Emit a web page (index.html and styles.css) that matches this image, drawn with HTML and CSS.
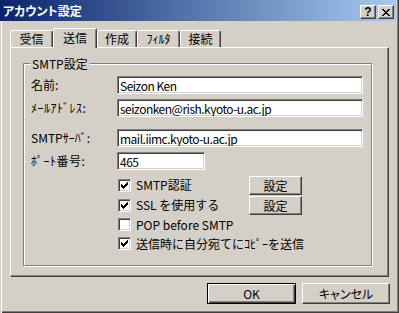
FILE: index.html
```html
<html>
    <head>
        <link rel="stylesheet" href="styles.css">
    </head>
    <body>
        <div class="window">
            <div class="titlebar">
                <div class="title">アカウント設定</div>
                <div class="caption-buttons">
                    <div class="caption-btn help">?</div>
                    <div class="caption-btn">
                        <svg width="8" height="7" viewBox="0 0 8 7" shape-rendering="crispEdges">
                            <path d="M0 0h2v1h-2z M6 0h2v1h-2z M1 1h2v1h-2z M5 1h2v1h-2z M2 2h4v1h-4z M3 3h2v1h-2z M2 4h4v1h-4z M1 5h2v1h-2z M5 5h2v1h-2z M0 6h2v1h-2z M6 6h2v1h-2z" fill="#000"/>
                        </svg>
                    </div>
                </div>
            </div>
            <div class="tabs">
                <div class="tab tab-recv">受信</div>
                <div class="tab tab-active tab-send">送信</div>
                <div class="tab tab-write">作成</div>
                <div class="tab tab-filter">ﾌｨﾙﾀ</div>
                <div class="tab tab-conn">接続</div>
            </div>
            <div class="panel">
                <div class="group">
                    <div class="group-title">SMTP設定</div>
                    <div class="row first">
                        <label class="label">名前:</label>
                        <input class="field width-lg" type="text" value="Seizon Ken"/>
                    </div>
                    <div class="row">
                        <label class="label kana">ﾒｰﾙｱﾄﾞﾚｽ:</label>
                        <input class="field width-lg" type="text" value="seizonken@rish.kyoto-u.ac.jp"/>
                    </div>
                    <div class="row spaced">
                        <label class="label">SMTPｻｰﾊﾞ:</label>
                        <input class="field width-lg" type="text" value="mail.iimc.kyoto-u.ac.jp"/>
                    </div>
                    <div class="row">
                        <label class="label kana">ﾎﾟｰﾄ番号:</label>
                        <input class="field width-sm" type="text" value="465"/>
                    </div>
                    <div class="checks">
                        <div class="check-row">
                            <span class="box"><svg width="11" height="11" viewBox="0 0 11 11" shape-rendering="crispEdges"><path d="M2 4h1v3h-1z M3 5h1v3h-1z M4 6h1v3h-1z M5 5h1v3h-1z M6 4h1v3h-1z M7 3h1v3h-1z M8 2h1v3h-1z" fill="#000"/></svg></span>
                            <span class="check-label">SMTP認証</span>
                            <button class="button-sm">設定</button>
                        </div>
                        <div class="check-row">
                            <span class="box"><svg width="11" height="11" viewBox="0 0 11 11" shape-rendering="crispEdges"><path d="M2 4h1v3h-1z M3 5h1v3h-1z M4 6h1v3h-1z M5 5h1v3h-1z M6 4h1v3h-1z M7 3h1v3h-1z M8 2h1v3h-1z" fill="#000"/></svg></span>
                            <span class="check-label">SSL を使用する</span>
                            <button class="button-sm">設定</button>
                        </div>
                        <div class="check-row short">
                            <span class="box"></span>
                            <span class="check-label">POP before SMTP</span>
                        </div>
                        <div class="check-row short">
                            <span class="box"><svg width="11" height="11" viewBox="0 0 11 11" shape-rendering="crispEdges"><path d="M2 4h1v3h-1z M3 5h1v3h-1z M4 6h1v3h-1z M5 5h1v3h-1z M6 4h1v3h-1z M7 3h1v3h-1z M8 2h1v3h-1z" fill="#000"/></svg></span>
                            <span class="check-label wide">送信時に自分宛てにｺﾋﾟｰを送信</span>
                        </div>
                    </div>
                </div>
            </div>
            <div class="footer">
                <button class="button-lg default">OK</button>
                <button class="button-lg">キャンセル</button>
            </div>
        </div>
    </body>
</html>
```

FILE: styles.css
```css
body {
    margin: 0;
    font-family: "Noto Sans CJK JP", sans-serif;
    font-size: 12px;
    color: #000;
}
.window {
    width: 399px;
    height: 313px;
    box-sizing: border-box;
    background: #d4d0c8;
    box-shadow: inset 1px 0 #d4d0c8, inset 2px 0 #fff, inset -1px -1px #404040, inset -2px -2px #808080;
}
.titlebar {
    width: 396px;
    height: 21px;
    box-sizing: border-box;
    padding: 0 2px 0 3px;
    display: flex;
    justify-content: space-between;
    background: linear-gradient(to right, #0a246a, #a6caf0);
}
.title {
    color: #fff;
    font-weight: bold;
    line-height: 22px;
    font-feature-settings: "palt";
}
.caption-buttons {
    display: flex;
    gap: 2px;
    margin-top: 5px;
}
.caption-btn {
    width: 16px;
    height: 14px;
    box-sizing: border-box;
    background: #d4d0c8;
    border: 1px solid;
    border-color: #fff #404040 #404040 #fff;
    box-shadow: inset -1px -1px #808080;
    display: flex;
    align-items: center;
    justify-content: center;
}
.help {
    font-family: "Liberation Sans", sans-serif;
    font-weight: bold;
    font-size: 12px;
    line-height: 12px;
}
.tabs {
    display: flex;
    align-items: flex-end;
    height: 19px;
    margin-top: 7px;
    padding-left: 10px;
}
.tab {
    height: 17px;
    box-sizing: border-box;
    border: 1px solid;
    border-bottom: none;
    border-color: #fff #404040 #404040 #fff;
    border-radius: 2px 2px 0 0;
    box-shadow: inset -1px 0 #808080;
    text-align: center;
    line-height: 16px;
}
.tab-active {
    height: 20px;
    margin-bottom: -1px;
    position: relative;
    background: #d4d0c8;
    line-height: 17px;
}
.tab-recv { width: 43px; }
.tab-send { width: 44px; }
.tab-write { width: 40px; }
.tab-filter { width: 43px; }
.tab-conn { width: 41px; }
.panel {
    margin-left: 10px;
    width: 379px;
    height: 230px;
    box-sizing: border-box;
    border: 1px solid;
    border-color: #fff #404040 #404040 #fff;
    box-shadow: inset -1px -1px #808080;
    padding: 15px 0 0 12px;
}
.group {
    width: 349px;
    height: 203px;
    box-sizing: border-box;
    border: 1px solid #808080;
    box-shadow: inset 1px 1px #fff, 1px 1px #fff;
    padding: 0 0 0 7px;
}
.group-title {
    width: fit-content;
    margin: -8px 0 0 -1px;
    padding: 0 2px;
    background: #d4d0c8;
    line-height: 15px;
}
.row {
    display: flex;
    align-items: center;
    margin-top: 5px;
}
.row.first {
    margin-top: 5px;
}
.row.spaced {
    margin-top: 12px;
}
.label {
    width: 86px;
    line-height: 14px;
}
.label.kana {
    letter-spacing: 0.5px;
}
.field {
    height: 18px;
    box-sizing: border-box;
    margin: 0;
    padding: 0 2px;
    border: 1px solid;
    border-color: #808080 #fff #fff #808080;
    box-shadow: inset 1px 1px #404040, inset -1px -1px #d4d0c8;
    background: #fff;
    font-family: inherit;
    font-size: 12px;
    letter-spacing: -0.5px;
    color: #000;
    outline: none;
}
.width-lg {
    width: 246px;
}
.width-sm {
    width: 88px;
}
.checks {
    margin-top: 5px;
    padding-left: 87px;
}
.check-row {
    display: flex;
    align-items: center;
    height: 20px;
}
.check-row.short {
    height: 19px;
}
.box {
    width: 13px;
    height: 13px;
    box-sizing: border-box;
    border: 1px solid;
    border-color: #808080 #fff #fff #808080;
    box-shadow: inset 1px 1px #404040, inset -1px -1px #d4d0c8;
    background: #fff;
    margin-right: 5px;
}
.box svg {
    display: block;
}
.check-label {
    width: 113px;
    line-height: 14px;
    white-space: nowrap;
}
.check-label.wide {
    width: auto;
}
button {
    margin: 0;
    padding: 0;
    background: #d4d0c8;
    border: 1px solid;
    border-color: #fff #404040 #404040 #fff;
    box-shadow: inset -1px -1px #808080;
    font-family: inherit;
    font-size: 12px;
    color: #000;
    font-feature-settings: "palt";
}
.button-sm {
    width: 53px;
    height: 19px;
}
.footer {
    display: flex;
    justify-content: flex-end;
    gap: 6px;
    padding: 6px 9px 0 0;
}
.button-lg {
    width: 88px;
    height: 21px;
}
.button-lg.default {
    width: 89px;
    border-color: #000;
    box-shadow: inset 1px 1px #fff, inset -1px -1px #404040, inset -2px -2px #808080;
}
```
